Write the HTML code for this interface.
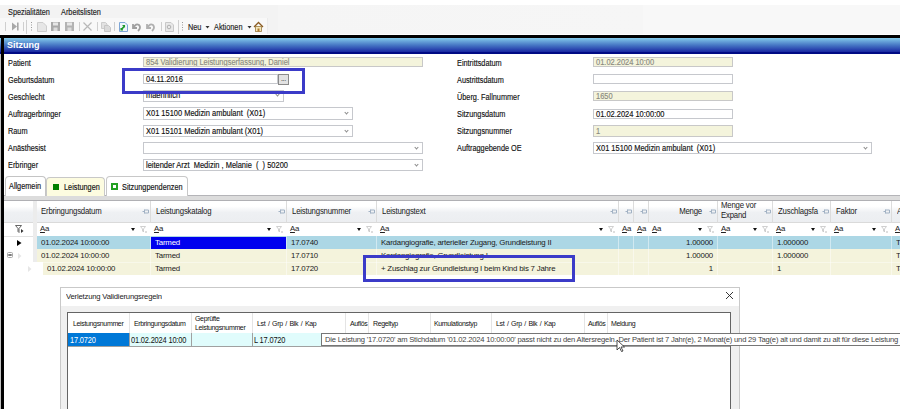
<!DOCTYPE html>
<html><head><meta charset="utf-8">
<style>
*{box-sizing:border-box;margin:0;padding:0}
html,body{width:900px;height:409px;overflow:hidden;background:#fff;position:relative}
body{font-family:"Liberation Sans",sans-serif;font-size:8px;color:#1e1e1e;letter-spacing:-0.2px}
.a{position:absolute;white-space:nowrap}
.inp .t{display:inline-block;transform:scaleX(0.9);transform-origin:0 0;-webkit-text-stroke:0.15px currentColor}
.lbl{position:absolute;white-space:nowrap;font-size:8.5px;line-height:12px;letter-spacing:0;color:#111;transform:scaleX(0.86);transform-origin:0 0;-webkit-text-stroke:0.15px currentColor}
.inp{position:absolute;border:1px solid #c6c8cd;background:#fff;height:11px;font-size:8.3px;line-height:9px;padding-left:2px;white-space:nowrap;overflow:hidden;letter-spacing:0;color:#111}
.ro{background:#f4f4dc;color:#8a8a80;border-color:#c8c8c8}
.chev{position:absolute;right:4.5px;top:2px;width:3px;height:3px;border-right:1px solid #8a8a8a;border-bottom:1px solid #8a8a8a;transform:rotate(45deg)}
.hl{position:absolute;border:3px solid #3b3bc8}
.gh{position:absolute;white-space:nowrap;font-size:8.2px;line-height:10px;color:#1a1a1a;transform:scaleX(0.95);transform-origin:0 0}
.gc{position:absolute;white-space:nowrap;font-size:8px;line-height:14.5px;color:#111;transform:scaleX(0.98);transform-origin:0 0}
.fa{position:absolute;white-space:nowrap;font-size:7.8px;line-height:10px;color:#222;letter-spacing:-0.3px}
.dt{position:absolute;white-space:nowrap;font-size:8px;line-height:10px;color:#1a1a1a;transform:scaleX(0.96);transform-origin:0 0}
.dv{position:absolute;white-space:nowrap;font-size:8.4px;line-height:12px;color:#111;transform:scaleX(0.89);transform-origin:0 0}
.dh{position:absolute;white-space:nowrap;font-size:7px;line-height:10px;color:#111;letter-spacing:-0.35px;word-spacing:1px}
.tt{position:absolute;white-space:nowrap;font-size:7.6px;line-height:11px;color:#444}
</style></head><body>
<!-- menu/toolbar -->
<div class="a" style="left:0;top:5px;width:900px;height:29px;background:linear-gradient(90deg,#f3f3f3 0px,#f3f3f3 278px,#f5f5f5 278px,#f6f6f6 643px,#f8f8f8 643px)"></div>
<div class="lbl" style="left:8px;top:6px;color:#222">Spezialitäten</div>
<div class="lbl" style="left:61px;top:6px;color:#222">Arbeitslisten</div>
<div class="a" style="left:0;top:34px;width:900px;height:1px;background:#fff"></div>
<div class="a" style="left:0;top:35px;width:900px;height:3px;background:#000"></div>
<!-- title bar -->
<div class="a" style="left:0;top:38px;width:900px;height:16px;background:linear-gradient(#84cbea 0%,#68a4da 20%,#4676c4 45%,#2e4cb2 68%,#1a2aa2 86%,#000a84 87%,#000a84 100%)"></div>
<div class="a" style="left:0;top:54px;width:1px;height:355px;background:#c2c2c2"></div>
<div class="a" style="left:1px;top:35px;width:3px;height:374px;background:#000"></div>
<div class="a" style="left:7px;top:39px;font-size:9px;font-weight:bold;color:#fff;line-height:12px;letter-spacing:0">Sitzung</div>

<!-- form labels left -->
<div class="lbl" style="left:8px;top:57px">Patient</div>
<div class="lbl" style="left:8px;top:74px">Geburtsdatum</div>
<div class="lbl" style="left:8px;top:91px">Geschlecht</div>
<div class="lbl" style="left:8px;top:108px">Auftragerbringer</div>
<div class="lbl" style="left:8px;top:125px">Raum</div>
<div class="lbl" style="left:8px;top:142px">Anästhesist</div>
<div class="lbl" style="left:8px;top:159px">Erbringer</div>

<div class="inp ro" style="left:143px;top:57px;width:280px;height:10px"><span class="t">854 Validierung Leistungserfassung, Daniel</span></div>
<div class="inp" style="left:143px;top:74px;width:135px;height:10px;color:#111"><span class="t">04.11.2016</span></div>
<div class="a" style="left:278px;top:74px;width:11px;height:11px;background:#e2e2e2;border:1px solid #8a8a8a;font-size:7px;line-height:8px;text-align:center">...</div>
<div class="inp" style="left:143px;top:90px;width:141px;height:12px"><span class="t">maennlich</span><span class="chev"></span></div>
<div class="inp" style="left:143px;top:107px;width:210px;height:13px;line-height:11px"><span class="t">X01 15100 Medizin ambulant&nbsp; (X01)</span><span class="chev" style="top:3px"></span></div>
<div class="inp" style="left:143px;top:125px;width:210px;height:12px;line-height:11px"><span class="t">X01 15101 Medizin ambulant (X01)</span><span class="chev" style="top:3px"></span></div>
<div class="inp" style="left:143px;top:142px;width:280px;height:12px"><span class="chev" style="top:3px"></span></div>
<div class="inp" style="left:143px;top:159px;width:280px;height:12px;line-height:11px"><span class="t">leitender Arzt&nbsp; Medizin , Melanie&nbsp; (&nbsp; ) 50200</span><span class="chev" style="top:3px"></span></div>

<!-- right labels -->
<div class="lbl" style="left:457px;top:57px">Eintrittsdatum</div>
<div class="lbl" style="left:457px;top:74px">Austrittsdatum</div>
<div class="lbl" style="left:457px;top:91px">Überg. Fallnummer</div>
<div class="lbl" style="left:457px;top:108px">Sitzungsdatum</div>
<div class="lbl" style="left:457px;top:125px">Sitzungsnummer</div>
<div class="lbl" style="left:457px;top:142px">Auftraggebende OE</div>

<div class="inp ro" style="left:593px;top:57px;width:140px;height:10px"><span class="t">01.02.2024 10:00</span></div>
<div class="inp" style="left:593px;top:74px;width:140px;height:10px"></div>
<div class="inp ro" style="left:593px;top:91px;width:140px;height:10px"><span class="t">1650</span></div>
<div class="inp" style="left:593px;top:109px;width:140px;height:10px;color:#111"><span class="t">01.02.2024 10:00:00</span></div>
<div class="inp ro" style="left:593px;top:125px;width:140px;height:12px;line-height:10px"><span class="t">1</span></div>
<div class="inp" style="left:593px;top:142px;width:279px;height:12px;line-height:11px"><span class="t">X01 15100 Medizin ambulant&nbsp; (X01)</span><span class="chev" style="top:3px"></span></div>

<div class="hl" style="left:122px;top:68px;width:183px;height:26px"></div>


<!-- toolbar icons -->
<div class="a" style="left:0;top:18px;width:268px;height:16px;background:#f8f8f8;border-right:1px solid #ebebeb"></div>
<svg class="a" style="left:0;top:18px" width="270" height="17" viewBox="0 18 270 17">
 <g stroke="#cfcfcf" stroke-width="1">
  <line x1="5.5" y1="22" x2="5.5" y2="31"/>
  <line x1="23.5" y1="22" x2="23.5" y2="31"/>
  <line x1="26.5" y1="20" x2="26.5" y2="34"/>
  <line x1="79.5" y1="22" x2="79.5" y2="31"/>
  <line x1="97.5" y1="22" x2="97.5" y2="31"/>
  <line x1="114.5" y1="22" x2="114.5" y2="31"/>
  <line x1="161.5" y1="22" x2="161.5" y2="31"/>
  <line x1="178.5" y1="20" x2="178.5" y2="34"/>
 </g>
 <g stroke="#9a9a9a" stroke-width="1" stroke-dasharray="1,1.5">
  <line x1="31.5" y1="22" x2="31.5" y2="32"/>
  <line x1="182.5" y1="22" x2="182.5" y2="32"/>
 </g>
 <!-- skip end -->
 <path d="M12 22.5 L17 26.5 L12 30.5 Z" fill="#a8a8a8"/><rect x="17" y="22.5" width="1.6" height="8" fill="#a8a8a8"/>
 <!-- new doc -->
 <path d="M37.5 22.5 H43 L46.5 26 V31.5 H37.5 Z" fill="#e6e6e6" stroke="#cdcdcd"/>
 <!-- save -->
 <path d="M51 22 H60 V31 H51 Z" fill="#a9a9a9"/><rect x="53" y="22.5" width="5" height="3" fill="#e6e6e6"/><rect x="53.5" y="27.5" width="4" height="3.5" fill="#dcdcdc"/>
 <path d="M65 22 H74 V31 H65 Z" fill="#b3b3b3"/><rect x="67" y="22.5" width="5" height="3" fill="#e6e6e6"/><rect x="67.5" y="27.5" width="4" height="3.5" fill="#dcdcdc"/>
 <!-- X -->
 <path d="M83.5 22.5 L91.5 30.5 M91.5 22.5 L83.5 30.5" stroke="#b8b8b8" stroke-width="1.2"/>
 <!-- copy -->
 <path d="M101.5 22.5 H105.5 L107 24 V28.5 H101.5 Z" fill="#e2e2e2" stroke="#cccccc"/><path d="M104.5 25.5 H108.5 L110.5 27.5 V31.5 H104.5 Z" fill="#dadada" stroke="#c6c6c6"/>
 <!-- green doc -->
 <path d="M119.5 22.5 H125 L127.5 25 V31.5 H119.5 Z" fill="#eef4fb" stroke="#7ea6d6"/><path d="M121 29.5 L124.5 25.5 M122.5 25.5 H124.5 V27.5 M124 27 L121.5 30 M121 28 V30 H123" fill="none" stroke="#1e9a2a" stroke-width="1.1"/>
 <!-- undo/redo -->
 <path d="M133 24 L133 28 L137 28 M133.5 27.5 Q136 23 139 25 Q141.5 27.5 138 31" fill="none" stroke="#a0a0a0" stroke-width="1.8"/>
 <path d="M147 24 L147 28 L151 28 M147.5 27.5 Q150 23 153 25 Q155.5 27.5 152 31" fill="none" stroke="#b0b0b0" stroke-width="1.8"/>
 <!-- doc search -->
 <path d="M165.5 22.5 H171 L173.5 25 V31.5 H165.5 Z" fill="#e8e8e8" stroke="#c8c8c8"/><circle cx="169" cy="27" r="1.8" fill="none" stroke="#b0b0b0"/>
 <!-- home -->
 <path d="M254 27 L258.5 22.5 L263 27" fill="none" stroke="#8a5a20" stroke-width="1.3"/><rect x="255.5" y="26.5" width="6" height="5" fill="#f3e6b8" stroke="#9a7a40" stroke-width="0.8"/><rect x="257.5" y="28.5" width="2" height="3" fill="#b07a30"/>
 <path d="M205.5 26 L209.5 26 L207.5 28.5 Z" fill="#333"/>
 <path d="M247.5 26 L251.5 26 L249.5 28.5 Z" fill="#333"/>
</svg>
<div class="lbl" style="left:188px;top:21px;color:#222">Neu</div>
<div class="lbl" style="left:214px;top:21px;color:#222">Aktionen</div>

<!-- tabs -->
<div class="a" style="left:4px;top:195px;width:896px;height:6px;background:#dcdcdc;border-top:1px solid #b4b4b8;border-bottom:1px solid #b0b0b4"></div>
<div class="a" style="left:5px;top:176px;width:41px;height:20px;border:1px solid #c4c4c4;border-bottom:none;border-radius:4px 4px 0 0;background:#fff"></div>
<div class="lbl" style="left:9px;top:180px">Allgemein</div>
<div class="a" style="left:46px;top:177px;width:59px;height:19px;border:1px solid #c8c8c8;border-bottom:none;border-radius:4px 4px 0 0;background:#fdfce0"></div>
<div class="a" style="left:53px;top:184px;width:6px;height:6px;background:#008000"></div>
<div class="lbl" style="left:64px;top:181px">Leistungen</div>
<div class="a" style="left:106px;top:176px;width:82px;height:20px;border:1px solid #c8c8c8;border-bottom:none;border-radius:4px 4px 0 0;background:#fff"></div>
<div class="a" style="left:111px;top:183px;width:7px;height:7px;border:2px solid #22a022"></div>
<div class="lbl" style="left:122px;top:181px">Sitzungpendenzen</div>

<!-- grid -->
<div id="grid"></div>
<div class="a" style="left:4px;top:201px;width:896px;height:22px;background:linear-gradient(#fff 0%,#fff 25%,#eef0f3 55%,#eceef1 100%);border-bottom:1px solid #dadada"></div>
<div class="a" style="left:33px;top:203px;width:1px;height:18px;background:#d4d4d4"></div>
<div class="a" style="left:150px;top:201px;width:1px;height:36px;background:#dcdcdc"></div>
<div class="a" style="left:286px;top:201px;width:1px;height:36px;background:#dcdcdc"></div>
<div class="a" style="left:376px;top:201px;width:1px;height:36px;background:#dcdcdc"></div>
<div class="a" style="left:618px;top:201px;width:1px;height:36px;background:#dcdcdc"></div>
<div class="a" style="left:633px;top:201px;width:1px;height:36px;background:#dcdcdc"></div>
<div class="a" style="left:648px;top:201px;width:1px;height:36px;background:#dcdcdc"></div>
<div class="a" style="left:717px;top:201px;width:1px;height:36px;background:#dcdcdc"></div>
<div class="a" style="left:772px;top:201px;width:1px;height:36px;background:#dcdcdc"></div>
<div class="a" style="left:830px;top:201px;width:1px;height:36px;background:#dcdcdc"></div>
<div class="a" style="left:891px;top:201px;width:1px;height:36px;background:#dcdcdc"></div>
<div class="gh" style="left:41px;top:207px">Erbringungsdatum</div>
<svg class="a" style="left:142px;top:209px" width="7" height="5"><path d="M0.5 2.5 H2.5 M2.5 0.5 V4.5 M2.5 1 H6.5 V4 H2.5" fill="none" stroke="#a2b2c4" stroke-width="1"/></svg>
<div class="gh" style="left:156px;top:207px">Leistungskatalog</div>
<svg class="a" style="left:278px;top:209px" width="7" height="5"><path d="M0.5 2.5 H2.5 M2.5 0.5 V4.5 M2.5 1 H6.5 V4 H2.5" fill="none" stroke="#a2b2c4" stroke-width="1"/></svg>
<div class="gh" style="left:292px;top:207px">Leistungsnummer</div>
<svg class="a" style="left:368px;top:209px" width="7" height="5"><path d="M0.5 2.5 H2.5 M2.5 0.5 V4.5 M2.5 1 H6.5 V4 H2.5" fill="none" stroke="#a2b2c4" stroke-width="1"/></svg>
<div class="gh" style="left:382px;top:207px">Leistungstext</div>
<svg class="a" style="left:610px;top:209px" width="7" height="5"><path d="M0.5 2.5 H2.5 M2.5 0.5 V4.5 M2.5 1 H6.5 V4 H2.5" fill="none" stroke="#a2b2c4" stroke-width="1"/></svg>
<svg class="a" style="left:625px;top:209px" width="7" height="5"><path d="M0.5 2.5 H2.5 M2.5 0.5 V4.5 M2.5 1 H6.5 V4 H2.5" fill="none" stroke="#a2b2c4" stroke-width="1"/></svg>
<svg class="a" style="left:640px;top:209px" width="7" height="5"><path d="M0.5 2.5 H2.5 M2.5 0.5 V4.5 M2.5 1 H6.5 V4 H2.5" fill="none" stroke="#a2b2c4" stroke-width="1"/></svg>
<div class="gh" style="left:648px;width:54px;text-align:right;top:207px;transform-origin:100% 0">Menge</div>
<svg class="a" style="left:709px;top:209px" width="7" height="5"><path d="M0.5 2.5 H2.5 M2.5 0.5 V4.5 M2.5 1 H6.5 V4 H2.5" fill="none" stroke="#a2b2c4" stroke-width="1"/></svg>
<div class="gh" style="left:721px;top:201px;line-height:9.5px">Menge vor<br>Expand</div>
<svg class="a" style="left:764px;top:209px" width="7" height="5"><path d="M0.5 2.5 H2.5 M2.5 0.5 V4.5 M2.5 1 H6.5 V4 H2.5" fill="none" stroke="#a2b2c4" stroke-width="1"/></svg>
<div class="gh" style="left:778px;top:207px">Zuschlagsfa</div>
<svg class="a" style="left:822px;top:209px" width="7" height="5"><path d="M0.5 2.5 H2.5 M2.5 0.5 V4.5 M2.5 1 H6.5 V4 H2.5" fill="none" stroke="#a2b2c4" stroke-width="1"/></svg>
<div class="gh" style="left:836px;top:207px">Faktor</div>
<svg class="a" style="left:883px;top:209px" width="7" height="5"><path d="M0.5 2.5 H2.5 M2.5 0.5 V4.5 M2.5 1 H6.5 V4 H2.5" fill="none" stroke="#a2b2c4" stroke-width="1"/></svg>
<div class="gh" style="left:897px;top:207px">A</div>
<div class="a" style="left:4px;top:223px;width:896px;height:13px;background:#fff"></div>
<div class="a" style="left:33px;top:201px;width:4px;height:61px;background:#ececec"></div>
<div class="a" style="left:4px;top:236px;width:29px;height:1px;background:#e2e2e2"></div>
<svg class="a" style="left:15px;top:225px" width="9" height="9"><path d="M0.5 0.5 H6.5 L4 3.5 V7.5 L3 6.5 V3.5 Z" fill="#fff" stroke="#555" stroke-width="0.9"/><path d="M6 4 L8.5 6 L6 8 Z" fill="#333"/></svg>
<div class="fa" style="left:40px;top:224px"><u>A</u>a</div>
<svg class="a" style="left:131px;top:228px" width="4" height="3"><path d="M0 0 H4 L2 3 Z" fill="#111"/></svg>
<svg class="a" style="left:140px;top:226px" width="8" height="7"><path d="M0.5 0.5 H5.5 L3.5 3 V6 L2.5 5 V3 Z" fill="none" stroke="#c4c4c4" stroke-width="0.8"/><path d="M5 5 L7 7 M7 5 L5 7" stroke="#c8c8c8" stroke-width="0.6"/></svg>
<div class="fa" style="left:154px;top:224px"><u>A</u>a</div>
<svg class="a" style="left:267px;top:228px" width="4" height="3"><path d="M0 0 H4 L2 3 Z" fill="#111"/></svg>
<svg class="a" style="left:276px;top:226px" width="8" height="7"><path d="M0.5 0.5 H5.5 L3.5 3 V6 L2.5 5 V3 Z" fill="none" stroke="#c4c4c4" stroke-width="0.8"/><path d="M5 5 L7 7 M7 5 L5 7" stroke="#c8c8c8" stroke-width="0.6"/></svg>
<div class="fa" style="left:290px;top:224px"><u>A</u>a</div>
<svg class="a" style="left:357px;top:228px" width="4" height="3"><path d="M0 0 H4 L2 3 Z" fill="#111"/></svg>
<svg class="a" style="left:366px;top:226px" width="8" height="7"><path d="M0.5 0.5 H5.5 L3.5 3 V6 L2.5 5 V3 Z" fill="none" stroke="#c4c4c4" stroke-width="0.8"/><path d="M5 5 L7 7 M7 5 L5 7" stroke="#c8c8c8" stroke-width="0.6"/></svg>
<div class="fa" style="left:380px;top:224px"><u>A</u>a</div>
<svg class="a" style="left:599px;top:228px" width="4" height="3"><path d="M0 0 H4 L2 3 Z" fill="#111"/></svg>
<svg class="a" style="left:608px;top:226px" width="8" height="7"><path d="M0.5 0.5 H5.5 L3.5 3 V6 L2.5 5 V3 Z" fill="none" stroke="#c4c4c4" stroke-width="0.8"/><path d="M5 5 L7 7 M7 5 L5 7" stroke="#c8c8c8" stroke-width="0.6"/></svg>
<div class="fa" style="left:622px;top:224px"><u>A</u>a</div>
<div class="fa" style="left:637px;top:224px"><u>A</u>a</div>
<div class="fa" style="left:652px;top:224px"><u>A</u>a</div>
<svg class="a" style="left:698px;top:228px" width="4" height="3"><path d="M0 0 H4 L2 3 Z" fill="#111"/></svg>
<svg class="a" style="left:707px;top:226px" width="8" height="7"><path d="M0.5 0.5 H5.5 L3.5 3 V6 L2.5 5 V3 Z" fill="none" stroke="#c4c4c4" stroke-width="0.8"/><path d="M5 5 L7 7 M7 5 L5 7" stroke="#c8c8c8" stroke-width="0.6"/></svg>
<div class="fa" style="left:721px;top:224px"><u>A</u>a</div>
<svg class="a" style="left:753px;top:228px" width="4" height="3"><path d="M0 0 H4 L2 3 Z" fill="#111"/></svg>
<svg class="a" style="left:762px;top:226px" width="8" height="7"><path d="M0.5 0.5 H5.5 L3.5 3 V6 L2.5 5 V3 Z" fill="none" stroke="#c4c4c4" stroke-width="0.8"/><path d="M5 5 L7 7 M7 5 L5 7" stroke="#c8c8c8" stroke-width="0.6"/></svg>
<div class="fa" style="left:776px;top:224px"><u>A</u>a</div>
<svg class="a" style="left:811px;top:228px" width="4" height="3"><path d="M0 0 H4 L2 3 Z" fill="#111"/></svg>
<svg class="a" style="left:820px;top:226px" width="8" height="7"><path d="M0.5 0.5 H5.5 L3.5 3 V6 L2.5 5 V3 Z" fill="none" stroke="#c4c4c4" stroke-width="0.8"/><path d="M5 5 L7 7 M7 5 L5 7" stroke="#c8c8c8" stroke-width="0.6"/></svg>
<div class="fa" style="left:834px;top:224px"><u>A</u>a</div>
<svg class="a" style="left:872px;top:228px" width="4" height="3"><path d="M0 0 H4 L2 3 Z" fill="#111"/></svg>
<svg class="a" style="left:881px;top:226px" width="8" height="7"><path d="M0.5 0.5 H5.5 L3.5 3 V6 L2.5 5 V3 Z" fill="none" stroke="#c4c4c4" stroke-width="0.8"/><path d="M5 5 L7 7 M7 5 L5 7" stroke="#c8c8c8" stroke-width="0.6"/></svg>
<div class="fa" style="left:895px;top:224px"><u>A</u>a</div>
<div class="a" style="left:37px;top:236px;width:863px;height:13px;background:#acd7e5"></div>
<div class="a" style="left:37px;top:249px;width:863px;height:13px;background:#f4f3dc"></div>
<div class="a" style="left:43px;top:262px;width:857px;height:13px;background:#f4f3dc;border-top:1px solid #f8f8ea"></div>
<div class="a" style="left:150px;top:236px;width:1px;height:39px;background:rgba(255,255,255,0.45)"></div>
<div class="a" style="left:286px;top:236px;width:1px;height:39px;background:rgba(255,255,255,0.45)"></div>
<div class="a" style="left:376px;top:236px;width:1px;height:39px;background:rgba(255,255,255,0.45)"></div>
<div class="a" style="left:618px;top:236px;width:1px;height:39px;background:rgba(255,255,255,0.45)"></div>
<div class="a" style="left:633px;top:236px;width:1px;height:39px;background:rgba(255,255,255,0.45)"></div>
<div class="a" style="left:648px;top:236px;width:1px;height:39px;background:rgba(255,255,255,0.45)"></div>
<div class="a" style="left:717px;top:236px;width:1px;height:39px;background:rgba(255,255,255,0.45)"></div>
<div class="a" style="left:772px;top:236px;width:1px;height:39px;background:rgba(255,255,255,0.45)"></div>
<div class="a" style="left:830px;top:236px;width:1px;height:39px;background:rgba(255,255,255,0.45)"></div>
<div class="a" style="left:891px;top:236px;width:1px;height:39px;background:rgba(255,255,255,0.45)"></div>
<div class="a" style="left:151px;top:237px;width:135px;height:12px;background:#0000ee"></div>
<div class="gc" style="left:41px;top:236px;color:#1a1a1a">01.02.2024 10:00:00</div>
<div class="gc" style="left:155px;top:236px;color:#fff">Tarmed</div>
<div class="gc" style="left:291px;top:236px;color:#1a1a1a">17.0740</div>
<div class="gc" style="left:381px;top:236px;color:#1a1a1a">Kardangiografie, arterieller Zugang, Grundleistung II</div>
<div class="gc" style="left:648px;width:65px;text-align:right;top:236px;color:#1a1a1a;transform-origin:100% 0">1.00000</div>
<div class="gc" style="left:777px;top:236px;color:#1a1a1a">1.000000</div>
<div class="gc" style="left:896px;top:236px;color:#1a1a1a">T</div>
<div class="gc" style="left:41px;top:249px;color:#1a1a1a">01.02.2024 10:00:00</div>
<div class="gc" style="left:155px;top:249px;color:#1a1a1a">Tarmed</div>
<div class="gc" style="left:291px;top:249px;color:#1a1a1a">17.0710</div>
<div class="gc" style="left:381px;top:249px;color:#1a1a1a">Kardangiografie, Grundleistung I</div>
<div class="gc" style="left:648px;width:65px;text-align:right;top:249px;color:#1a1a1a;transform-origin:100% 0">1.00000</div>
<div class="gc" style="left:777px;top:249px;color:#1a1a1a">1.000000</div>
<div class="gc" style="left:896px;top:249px;color:#1a1a1a">T</div>
<div class="gc" style="left:47px;top:262px;color:#1a1a1a">01.02.2024 10:00:00</div>
<div class="gc" style="left:155px;top:262px;color:#1a1a1a">Tarmed</div>
<div class="gc" style="left:291px;top:262px;color:#1a1a1a">17.0720</div>
<div class="gc" style="left:381px;top:262px;color:#1a1a1a">+ Zuschlag zur Grundleistung I beim Kind bis 7 Jahre</div>
<div class="gc" style="left:648px;width:65px;text-align:right;top:262px;color:#1a1a1a;transform-origin:100% 0">1</div>
<div class="gc" style="left:777px;top:262px;color:#1a1a1a">1</div>
<div class="gc" style="left:896px;top:262px;color:#1a1a1a">Ta</div>
<svg class="a" style="left:17px;top:240px" width="5" height="6"><path d="M0 0 L4.5 3 L0 6 Z" fill="#000"/></svg>
<svg class="a" style="left:7px;top:252px" width="6" height="6"><rect x="0.5" y="0.5" width="5" height="5" rx="1" fill="#fff" stroke="#a0a0a0" stroke-width="0.9"/><line x1="1.3" y1="3" x2="4.7" y2="3" stroke="#222" stroke-width="1.2"/></svg>
<svg class="a" style="left:18px;top:253px" width="4" height="6"><path d="M0 0 L3.5 3 L0 6 Z" fill="#e6e6e6"/></svg>
<svg class="a" style="left:28px;top:266px" width="4" height="6"><path d="M0 0 L3.5 3 L0 6 Z" fill="#e6e6e6"/></svg>
<div class="hl" style="left:363px;top:255px;width:212px;height:27px"></div>
<!--dialog-->
<div class="a" style="left:60px;top:287px;width:680px;height:130px;background:#f0f0f0;border:1px solid #c9c9c9"></div>
<div class="a" style="left:61px;top:288px;width:678px;height:18px;background:#fff"></div>
<div class="dt" style="left:66px;top:292px">Verletzung Validierungsregeln</div>
<svg class="a" style="left:725px;top:291px" width="9" height="9"><path d="M1 1 L8 8 M8 1 L1 8" stroke="#222" stroke-width="0.9"/></svg>
<div class="a" style="left:67px;top:312px;width:664px;height:110px;background:#fff;border:1px solid #646464"></div>
<div class="a" style="left:129px;top:313px;width:1px;height:20px;background:#e4e4e4"></div>
<div class="a" style="left:191px;top:313px;width:1px;height:20px;background:#e4e4e4"></div>
<div class="a" style="left:252px;top:313px;width:1px;height:20px;background:#e4e4e4"></div>
<div class="a" style="left:345px;top:313px;width:1px;height:20px;background:#e4e4e4"></div>
<div class="a" style="left:368px;top:313px;width:1px;height:20px;background:#e4e4e4"></div>
<div class="a" style="left:430px;top:313px;width:1px;height:20px;background:#e4e4e4"></div>
<div class="a" style="left:491px;top:313px;width:1px;height:20px;background:#e4e4e4"></div>
<div class="a" style="left:584px;top:313px;width:1px;height:20px;background:#e4e4e4"></div>
<div class="a" style="left:607px;top:313px;width:1px;height:20px;background:#e4e4e4"></div>
<div class="a" style="left:68px;top:333px;width:662px;height:13px;background:#e0fcfc"></div>
<div class="a" style="left:68px;top:333px;width:61px;height:13px;background:#0078d7"></div>
<div class="a" style="left:129px;top:333px;width:1px;height:13px;background:#a0a0a0"></div>
<div class="a" style="left:191px;top:333px;width:1px;height:13px;background:#a0a0a0"></div>
<div class="a" style="left:252px;top:333px;width:1px;height:13px;background:#a0a0a0"></div>
<div class="a" style="left:345px;top:333px;width:1px;height:13px;background:#a0a0a0"></div>
<div class="a" style="left:368px;top:333px;width:1px;height:13px;background:#a0a0a0"></div>
<div class="a" style="left:430px;top:333px;width:1px;height:13px;background:#a0a0a0"></div>
<div class="a" style="left:491px;top:333px;width:1px;height:13px;background:#a0a0a0"></div>
<div class="a" style="left:584px;top:333px;width:1px;height:13px;background:#a0a0a0"></div>
<div class="a" style="left:607px;top:333px;width:1px;height:13px;background:#a0a0a0"></div>
<div class="a" style="left:68px;top:346px;width:662px;height:1px;background:#a0a0a0"></div>
<div class="dh" style="left:73px;top:318.5px">Leistungsnummer</div>
<div class="dh" style="left:134px;top:318.5px">Erbringungsdatum</div>
<div class="dh" style="left:257px;top:318.5px">Lst / Grp / Blk / Kap</div>
<div class="dh" style="left:350px;top:318.5px">Auflös</div>
<div class="dh" style="left:373px;top:318.5px">Regeltyp</div>
<div class="dh" style="left:434px;top:318.5px">Kumulationstyp</div>
<div class="dh" style="left:496px;top:318.5px">Lst / Grp / Blk / Kap</div>
<div class="dh" style="left:588px;top:318.5px">Auflös</div>
<div class="dh" style="left:611px;top:318.5px">Meldung</div>
<div class="dh" style="left:195px;top:315px;line-height:8.5px">Geprüfte<br>Leistungsnummer</div>
<div class="dv" style="left:70px;top:333.5px;color:#fff">17.0720</div>
<div class="dv" style="left:131px;top:333.5px">01.02.2024 10:00</div>
<div class="dv" style="left:254px;top:333.5px">L 17.0720</div>
<div class="a" style="left:321px;top:333px;width:600px;height:13px;background:#fff;border:1px solid #767676"></div>
<div class="tt" style="left:325px;top:334px">Die Leistung '17.0720' am Stichdatum '01.02.2024 10:00:00' passt nicht zu den Altersregeln. Der Patient ist 7 Jahr(e), 2 Monat(e) und 29 Tag(e) alt und damit zu alt für diese Leistung</div>
<svg class="a" style="left:616px;top:339px" width="12" height="14"><path d="M1 1 L1 11 L3.5 8.5 L5.5 12.5 L7 12 L5 8 L8.5 8 Z" fill="#fff" stroke="#222" stroke-width="0.8"/></svg>
</body></html>
